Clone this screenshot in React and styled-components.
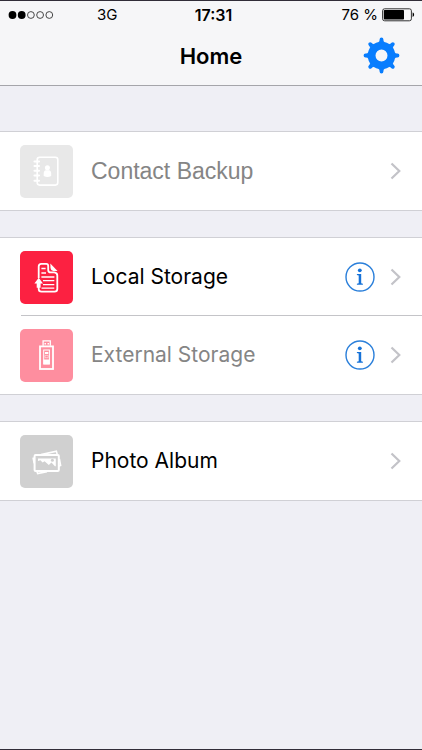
import React from "react";
import styled, { createGlobalStyle } from "styled-components";

const GlobalStyle = createGlobalStyle`
  *, *::before, *::after { box-sizing: border-box; }
  body {
    margin: 0;
    background: #efeff5;
    font-family: Inter, "Liberation Sans", sans-serif;
    color: #000;
  }
`;

const Screen = styled.div`
  min-height: 100vh;
  display: flex;
  flex-direction: column;
  background: #efeff5;
  border-top: 1px solid #312d38;
  border-bottom: 1px solid #312d38;
`;

const Header = styled.header`
  height: 85px;
  background: #f6f6f8;
  border-bottom: 1px solid #a5a5aa;
`;

const StatusBar = styled.div`
  display: grid;
  grid-template-columns: 1fr auto 1fr;
  align-items: center;
  height: 27px;
  padding: 0 7px 0 8px;
  font-size: 15px;
  line-height: 20px;
`;

const Carrier = styled.div`
  display: flex;
  align-items: center;
  gap: 43px;
`;

const Clock = styled.time`
  padding-left: 4px;
  font-size: 16px;
  font-weight: 600;
`;

const Power = styled.div`
  display: flex;
  align-items: center;
  justify-content: flex-end;
  gap: 4px;
`;

const NavBar = styled.div`
  display: grid;
  grid-template-columns: 1fr auto 1fr;
  align-items: center;
  height: 55px;
  padding: 0 22px;
`;

const Title = styled.h1`
  grid-column: 2;
  margin: 0;
  font-size: 22px;
  line-height: 28px;
  font-weight: 600;
`;

const IconButton = styled.button`
  display: flex;
  padding: 0;
  border: 0;
  background: none;
  cursor: pointer;
  justify-self: end;
`;

const Main = styled.main`
  display: flex;
  flex-direction: column;
  gap: 26px;
  padding-top: 45px;
`;

const Group = styled.ul`
  list-style: none;
  margin: 0;
  padding: 0;
  background: #fff;
  border-top: 1px solid #d0d0d5;
  border-bottom: 1px solid #d0d0d5;
`;

const Row = styled.li`
  position: relative;
  display: flex;
  align-items: center;
  height: 78px;
  padding: 0 20px;

  & + &::before {
    content: "";
    position: absolute;
    top: -1px;
    left: 21px;
    right: 0;
    height: 1px;
    background: #c4c4c8;
  }
`;

const RowLink = styled.a`
  flex: 1;
  display: flex;
  align-items: center;
  gap: 18px;
  color: ${(p) => (p.$muted ? "#858585" : "#000")};
  font-family: ${(p) => (p.$classic ? '"Liberation Sans", Arial' : 'Inter, "Liberation Sans"')}, sans-serif;
  font-size: ${(p) => (p.$classic ? 23 : 21)}px;
  line-height: 28px;
  text-decoration: none;
`;

const Tile = styled.span`
  display: flex;
  flex: none;
  width: 53px;
  height: 53px;
  border-radius: 5px;
  background: ${(p) => p.$color};
`;

const Actions = styled.div`
  display: flex;
  align-items: center;
  gap: 14px;
`;

const Signal = () => (
  <svg width="46" height="10" viewBox="0 0 46 10" role="img" aria-label="Signal: 2 of 5">
    {[0, 1, 2, 3, 4].map((i) => (
      <circle key={i} cx={4.5 + i * 9.2} cy="5" r={i < 2 ? 3.9 : 3.4}
        fill={i < 2 ? "#000" : "none"} stroke={i < 2 ? "none" : "#333"} strokeWidth="0.9" />
    ))}
  </svg>
);

const Battery = () => (
  <svg width="33" height="14" viewBox="0 0 33 14" aria-hidden="true">
    <rect x="0.6" y="0.8" width="28.8" height="12" rx="2" fill="none" stroke="#333" strokeWidth="1" />
    <rect x="1.8" y="2" width="20.2" height="9.6" rx="0.8" />
    <path d="M30.6 4.6c2 .6 2 3.8 0 4.4z" />
  </svg>
);

const Gear = () => (
  <svg width="37" height="37" viewBox="-18.5 -18.5 37 37" aria-hidden="true">
    <circle r="9.9" fill="none" stroke="#087dfe" strokeWidth="7.8" />
    <g fill="#087dfe">
      {[0, 45, 90, 135, 180, 225, 270, 315].map((a) => (
        <path key={a} transform={`rotate(${a})`}
          d="M-3.2 -13.2Q-1.7 -13.8 -1.9 -16A1.9 1.9 0 0 1 1.9 -16Q1.7 -13.8 3.2 -13.2z" />
      ))}
    </g>
  </svg>
);

const Info = () => (
  <svg width="30" height="30" viewBox="0 0 30 30" aria-hidden="true">
    <circle cx="15" cy="15" r="14" fill="none" stroke="#2a7fda" strokeWidth="1.4" />
    <circle cx="14.8" cy="8.3" r="1.9" fill="#1672d8" />
    <path d="M11.9 12h4.3v9.3l1.7.5v.9h-6v-.9l1.8-.5v-7.9l-1.8-.5z" fill="#1672d8" />
  </svg>
);

const Chevron = () => (
  <svg width="13" height="18" viewBox="0 0 13 18" aria-hidden="true">
    <path d="M2.5 1.5 10.3 9 2.5 16.5" fill="none" stroke="#c3c3c8" strokeWidth="2.2" />
  </svg>
);

const ContactArt = () => (
  <svg width="53" height="53" viewBox="0 0 53 53" fill="none" stroke="#fff" aria-hidden="true">
    <rect x="17.2" y="12.3" width="20.6" height="27.8" rx="2.5" strokeWidth="1.6" />
    <path d="M14.5 16.5h4.5M14.5 21h4.5M14.5 25.7h4.5M14.5 30.5h4.5M14.5 35.8h4.5" strokeWidth="2.1" strokeLinecap="round" />
    <circle cx="27.4" cy="22.8" r="2.5" fill="#fff" stroke="none" />
    <path d="M23.7 31v-2.2q0-3.5 2.2-3.5h3q2.3 0 2.3 3.5V31q-3.7 2.2-7.5 0z" fill="#fff" stroke="none" />
  </svg>
);

const LocalArt = () => (
  <svg width="53" height="53" viewBox="0 0 53 53" fill="none" stroke="#fff" aria-hidden="true">
    <path d="M18.7 27V15.5q0-2.6 2.6-2.6h5q1.9 0 1.9 2v4q0 2.5 2.7 2.5h3.4q3 .3 3 3V38q0 2.7-2.8 2.7H21.5q-2.8 0-2.8-2.7v-2" strokeWidth="1.8" />
    <path d="M21.4 17.5h4.2M21.4 22h4.6M21.4 26h13M23 29.7h11.3M23 33.7h11.3M21.5 37.2h12.8" strokeWidth="1.3" />
    <path d="M30.3 12.4 37.5 20h-4.3q-2.5-.3-2.7-3z" fill="#fff" stroke="none" />
    <path d="M18.7 26.8 23 32.5h-2.4v4.3h-3.9v-4.3h-2.3z" fill="#fff" stroke="none" />
  </svg>
);

const ExternalArt = () => (
  <svg width="53" height="53" viewBox="0 0 53 53" fill="none" stroke="#fff" aria-hidden="true">
    <path d="M23.1 16.8v-5h7.2v5" strokeWidth="1.3" />
    <rect x="20" y="17.4" width="13" height="22.6" strokeWidth="1.8" />
    <path d="M24.5 14h1.5v1.5h-1.5zM27.5 14H29v1.5h-1.5z" fill="#fff" stroke="none" />
    <rect x="23.7" y="21" width="5.7" height="14" strokeWidth="1" />
    <path d="M25 23h3.3v2H25zM23.5 30.5h6.1v4.8h-6.1z" fill="#fff" stroke="none" />
    <path d="M25 26.4h3.2v2.3H25z" strokeWidth=".5" />
  </svg>
);

const PhotoArt = () => (
  <svg width="53" height="53" viewBox="0 0 53 53" fill="none" stroke="#fff" aria-hidden="true">
    <path d="M21 19.6 36.4 16.3l1 3.8M39.4 24l1.2 6.5-1.8.5M14.6 23l-1.4.4 1 5M16.6 35.5l1.1 3L27 36.6" strokeWidth="1.6" />
    <rect x="14.6" y="20.1" width="24.2" height="15.9" rx="1" strokeWidth="2" />
    <path d="M18 23.4V26l2.4-.8 2.2 2.3 2-1.3 4.2 3.7 2.7-2.3 3.4 3.6h.9v-7.8z" fill="#fff" stroke="none" />
    <circle cx="32.4" cy="25.2" r="1.5" fill="#d0d0d0" stroke="none" />
  </svg>
);

const groups = [
  [{ label: "Contact Backup", color: "#e8e8e8", art: ContactArt, muted: true, classic: true }],
  [
    { label: "Local Storage", color: "#fc2141", art: LocalArt, info: true },
    { label: "External Storage", color: "#fe8e9f", art: ExternalArt, muted: true, info: true },
  ],
  [{ label: "Photo Album", color: "#d0d0d0", art: PhotoArt }],
];

export default function App() {
  return (
    <Screen>
      <GlobalStyle />
      <Header>
        <StatusBar>
          <Carrier><Signal /><span>3G</span></Carrier>
          <Clock>17:31</Clock>
          <Power><span>76 %</span><Battery /></Power>
        </StatusBar>
        <NavBar>
          <Title>Home</Title>
          <IconButton type="button" aria-label="Settings"><Gear /></IconButton>
        </NavBar>
      </Header>
      <Main>
        {groups.map((items) => (
          <Group key={items[0].label}>
            {items.map(({ label, color, art: Art, muted, classic, info }) => (
              <Row key={label}>
                <RowLink href="#" $muted={muted} $classic={classic}>
                  <Tile $color={color}><Art /></Tile>
                  {label}
                </RowLink>
                <Actions>
                  {info && <IconButton type="button" aria-label={`About ${label}`}><Info /></IconButton>}
                  <Chevron />
                </Actions>
              </Row>
            ))}
          </Group>
        ))}
      </Main>
    </Screen>
  );
}
